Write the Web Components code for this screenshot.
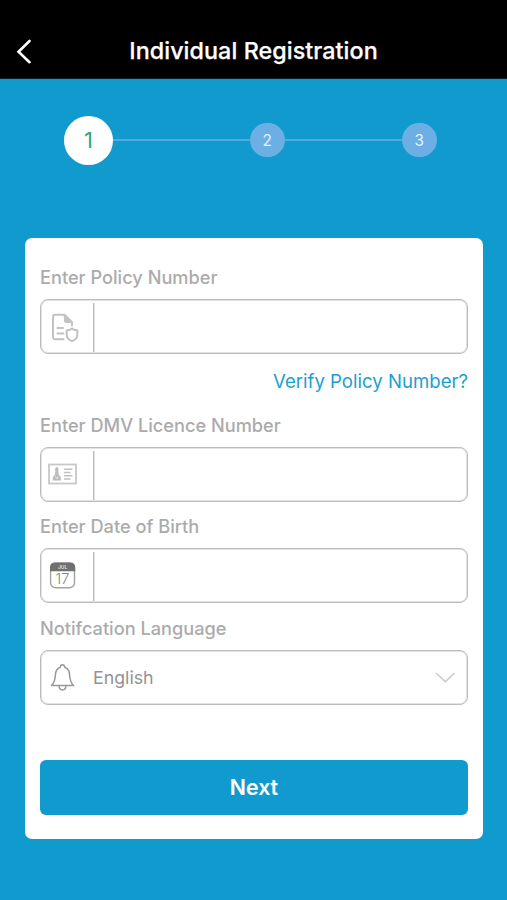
<!DOCTYPE html>
<html lang="en">
<head>
<meta charset="utf-8">
<title>Individual Registration</title>
<style>
body{margin:0;background:#119acd;font-family:Inter,"Liberation Sans",sans-serif}
</style>
</head>
<body>
<registration-screen></registration-screen>
<script>
const define=(name,html)=>customElements.define(name,class extends HTMLElement{
  constructor(){super();this.attachShadow({mode:'open'}).innerHTML=html;}
});

define('nav-header',`<style>
:host{display:grid;grid-template-columns:48px 1fr 48px;align-items:center;height:79px;box-sizing:border-box;padding-top:23px;background:#000;color:#fff;border-bottom:1px solid #05212c}
svg{display:block;margin-left:15px}
h1{margin:0;text-align:center;font-size:23.3px;font-weight:500;letter-spacing:.07px;line-height:30px;white-space:nowrap;-webkit-text-stroke:.25px #fff}
</style>
<svg width="20" height="26" viewBox="0 0 20 26" fill="none" stroke="#fff" stroke-width="2.6" stroke-linecap="round"><path d="M14.5 3L3.5 13.7L14.5 24.2"/></svg>
<h1><slot></slot></h1>`);

define('step-dot',`<style>
:host{display:flex;align-items:center;justify-content:center;width:34.5px;height:34.5px;border-radius:50%;background:#6cafe5;color:#e3f2fc;font-size:15.3px;flex:none}
:host([current]){width:49px;height:49px;background:#fff;color:#2fa67d;font-size:22px}
</style><slot></slot>`);

define('step-progress',`<style>
:host{display:flex;align-items:center;height:49px;padding:0 70.5px 0 64px;margin-top:36.5px}
i{height:2px;background:#4fabe0}
.a{flex:137}.b{flex:117.5}
</style><step-dot current>1</step-dot><i class="a"></i><step-dot>2</step-dot><i class="b"></i><step-dot>3</step-dot>`);

define('form-card',`<style>
:host{display:block;box-sizing:border-box;width:457.5px;height:601px;margin:73.5px 0 0 25px;padding:27px 14.5px 0 15px;background:#fff;border-radius:7px}
</style><slot></slot>`);

define('form-field',`<style>
:host{display:block;height:101.4px}
.label{font-size:18.2px;font-weight:500;line-height:24px;color:#ababab;white-space:nowrap}
.box{display:flex;height:55px;box-sizing:border-box;border:1px solid #bcbcbc;box-shadow:inset 0 0 0 1px #e2e2e2;border-radius:8px;margin-top:10px;padding:1px}
.icon{width:52px;box-sizing:border-box;border-right:1px solid #bcbcbc;box-shadow:1px 0 #e2e2e2;margin-top:2px;flex:none}
.icon ::slotted(*){margin:-1px 0 0 -1px}
.value{flex:1;display:flex;align-items:center;justify-content:space-between;font-size:17.8px;color:#929292;margin-left:-1px}
:host([plain]) .icon{border-color:transparent;box-shadow:none}
</style>
<div class="label"><slot name="label"></slot></div>
<div class="box"><div class="icon"><slot name="icon"></slot></div><div class="value"><slot></slot></div></div>`);

customElements.define('line-icon',class extends HTMLElement{
  connectedCallback(){
    const art={
      policy:`<g fill="none" stroke="#c2c2c2" stroke-width="2" stroke-linecap="round" stroke-linejoin="round"><path d="M22.5 37.2H14.3Q12 37.2 12 35V15Q12 12.7 14.3 12.7H23.5L31 20.2V23.5M16.5 26H22M16.5 31.5H22.5"/><path fill="#c2c2c2" stroke-width="1" d="M23.5 12.7L31 20.5H25Q23.5 20.5 23.5 19Z"/><path d="M31 26.6Q33.6 28.3 36.3 28.3V33Q36.3 37 31 39.2Q25.7 37 25.7 33V28.3Q28.4 28.3 31 26.6Z"/></g>`,
      licence:`<rect x="8" y="14.5" width="27" height="19" fill="none" stroke="#c8c8c8" stroke-width="1.8"/><g fill="#bcbcbc"><ellipse cx="15.8" cy="19.5" rx="1.8" ry="2.6"/><path d="M14.3 21.5H17.3L17.8 25.1L19.7 26.7L20 30.5H11.7L12 26.7L13.8 25.1Z"/></g><path d="M14.3 26.2L15.8 28.8L17.3 26.2" fill="none" stroke="#eee" stroke-width=".8"/><path d="M23 19.3H31.5M23 22.5H29.5M23 25.7H31.5M23 28.9H29.5" stroke="#c0c0c0" stroke-width="1.5"/>`,
      date:`<rect x="9.6" y="12.2" width="23.9" height="24.6" rx="5" fill="#fff" stroke="#a2a2a2" stroke-width="1.4"/><path d="M9 20.2V16.5Q9 11.5 14 11.5H29.2Q34.2 11.5 34.2 16.5V20.2Z" fill="#707070"/><text x="21.6" y="18" text-anchor="middle" font-size="5" font-weight="700" fill="#ddd">JUL</text><text x="21.5" y="33" text-anchor="middle" font-size="14.5" font-weight="300" fill="#858585">17</text>`,
      bell:`<g fill="none" stroke="#999" stroke-width="1.5" stroke-linecap="round" stroke-linejoin="round"><path d="M10.5 32.6C13.6 29.5 14.2 27 14.4 22C14.5 18 16.4 15.3 19.3 14.3Q19.4 11.7 21.5 11.7Q23.6 11.7 23.7 14.3C26.6 15.3 28.5 18 28.6 22C28.8 27 29.4 29.5 32.5 32.6Z"/><path d="M18 32.8Q18.2 37 21.5 37Q24.8 37 25 32.8"/></g>`,
      chevron:`<path d="M2 2L11.3 10.8L20.5 2" fill="none" stroke="#c9c9c9" stroke-width="1.5"/>`
    };
    const n=this.getAttribute('name'), small=n==='chevron';
    this.attachShadow({mode:'open'}).innerHTML=`<style>:host{display:block}svg{display:block}:host([name=chevron]){margin-right:9px}</style><svg width="${small?23:45}" height="${small?13:48}" viewBox="0 0 ${small?'23 13':'45 48'}">${art[n]}</svg>`;
  }
});

define('text-link',`<style>
:host{display:block;height:24px;margin:2.5px 0 20.2px;line-height:24px;text-align:right;font-size:18.6px;color:#209fce;white-space:nowrap}
</style><slot></slot>`);

define('primary-button',`<style>
:host{display:block;margin-top:42.8px}
button{display:block;width:100%;height:54.5px;border:0;padding:0;border-radius:6px;background:#119acd;color:#fff;font:600 21.3px/54.5px Inter,sans-serif}
</style><button><slot></slot></button>`);

define('registration-screen',`<style>
:host{display:flow-root;width:507px;height:900px;background:#119acd;overflow:hidden}
</style>
<nav-header>Individual Registration</nav-header>
<step-progress></step-progress>
<form-card>
<form-field><span slot="label">Enter Policy Number</span><line-icon slot="icon" name="policy"></line-icon></form-field>
<text-link><span>Verify Policy Number?</span></text-link>
<form-field><span slot="label">Enter DMV Licence Number</span><line-icon slot="icon" name="licence"></line-icon></form-field>
<form-field><span slot="label">Enter Date of Birth</span><line-icon slot="icon" name="date"></line-icon></form-field>
<form-field plain><span slot="label">Notifcation Language</span><line-icon slot="icon" name="bell"></line-icon><span>English</span><line-icon name="chevron"></line-icon></form-field>
<primary-button>Next</primary-button>
</form-card>`);
</script>
</body>
</html>
